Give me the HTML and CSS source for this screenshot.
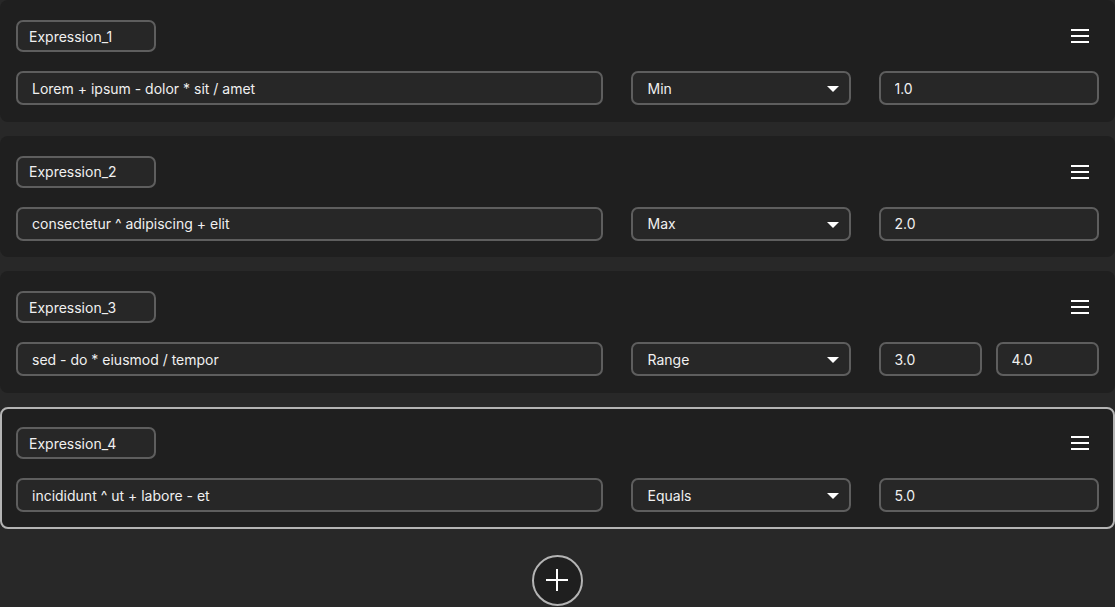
FILE: index.html
```html
<!DOCTYPE html>
<html lang="en">
    <head>
        <meta charset="UTF-8">
        <title>Expressions</title>
        <link rel="stylesheet" href="styles.css">
    </head>
    <body>
        <div class="list">
            <div class="card">
                <div class="card-head">
                    <input class="field name" value="Expression_1">
                    <button class="menu-btn"><svg width="18" height="14" viewBox="0 0 18 14"><path d="M0 1h18M0 7h18M0 13h18" stroke="#fff" stroke-width="2"/></svg></button>
                </div>
                <div class="card-row">
                    <input class="field" value="Lorem + ipsum - dolor * sit / amet">
                    <div class="select-wrap">
                        <select class="field select"><option>Min</option></select>
                        <svg class="arrow" width="12" height="6" viewBox="0 0 12 6"><path d="M0 0h12L6 6z" fill="#fff"/></svg>
                    </div>
                    <div class="values"><input class="field" value="1.0"></div>
                </div>
            </div>
            <div class="card">
                <div class="card-head">
                    <input class="field name" value="Expression_2">
                    <button class="menu-btn"><svg width="18" height="14" viewBox="0 0 18 14"><path d="M0 1h18M0 7h18M0 13h18" stroke="#fff" stroke-width="2"/></svg></button>
                </div>
                <div class="card-row">
                    <input class="field" value="consectetur ^ adipiscing + elit">
                    <div class="select-wrap">
                        <select class="field select"><option>Max</option></select>
                        <svg class="arrow" width="12" height="6" viewBox="0 0 12 6"><path d="M0 0h12L6 6z" fill="#fff"/></svg>
                    </div>
                    <div class="values"><input class="field" value="2.0"></div>
                </div>
            </div>
            <div class="card">
                <div class="card-head">
                    <input class="field name" value="Expression_3">
                    <button class="menu-btn"><svg width="18" height="14" viewBox="0 0 18 14"><path d="M0 1h18M0 7h18M0 13h18" stroke="#fff" stroke-width="2"/></svg></button>
                </div>
                <div class="card-row">
                    <input class="field" value="sed - do * eiusmod / tempor">
                    <div class="select-wrap">
                        <select class="field select"><option>Range</option></select>
                        <svg class="arrow" width="12" height="6" viewBox="0 0 12 6"><path d="M0 0h12L6 6z" fill="#fff"/></svg>
                    </div>
                    <div class="values two"><input class="field" value="3.0"><input class="field" value="4.0"></div>
                </div>
            </div>
            <div class="card active">
                <div class="card-head">
                    <input class="field name" value="Expression_4">
                    <button class="menu-btn"><svg width="18" height="14" viewBox="0 0 18 14"><path d="M0 1h18M0 7h18M0 13h18" stroke="#fff" stroke-width="2"/></svg></button>
                </div>
                <div class="card-row">
                    <input class="field" value="incididunt ^ ut + labore - et">
                    <div class="select-wrap">
                        <select class="field select"><option>Equals</option></select>
                        <svg class="arrow" width="12" height="6" viewBox="0 0 12 6"><path d="M0 0h12L6 6z" fill="#fff"/></svg>
                    </div>
                    <div class="values"><input class="field" value="5.0"></div>
                </div>
            </div>
            <div class="add-row">
                <button class="add-btn"><svg width="22" height="22" viewBox="0 0 22 22"><path d="M11 0v22M0 11h22" stroke="#fff" stroke-width="2"/></svg></button>
            </div>
        </div>
    </body>
</html>
```

FILE: styles.css
```css
body {
    margin: 0;
    background-color: #282828;
    color: #f0f0f0;
    font-family: Inter, "Noto Sans", sans-serif;
    font-size: 14px;
}

.list {
    display: flex;
    flex-direction: column;
    gap: 14px;
    width: 1114.5px;
}

.card {
    background-color: #1f1f1f;
    border: 2px solid transparent;
    border-radius: 8px;
    padding: 18px 14px 14.7px;
    display: flex;
    flex-direction: column;
    gap: 19px;
}
.card.active {
    border-color: #b4b4b4;
}

.card-head {
    display: flex;
    justify-content: space-between;
    align-items: center;
}

.card-row {
    display: grid;
    grid-template-columns: 1fr 220px 220px;
    gap: 28px;
}

.field {
    box-sizing: border-box;
    height: 34px;
    width: 100%;
    margin: 0;
    padding: 0 14px;
    background-color: #272727;
    border: 2px solid #5e5e5e;
    border-radius: 7px;
    color: #f0f0f0;
    font-family: inherit;
    font-size: 14px;
    outline: none;
}
.field.name {
    width: 140px;
    height: 32px;
    padding: 0 11px;
}

.select-wrap {
    position: relative;
}
.select {
    appearance: none;
    -webkit-appearance: none;
    padding-left: 15px;
}
.arrow {
    position: absolute;
    right: 12px;
    top: 15px;
    pointer-events: none;
}

.values {
    display: flex;
    gap: 14px;
}
.values .field {
    min-width: 0;
}

.menu-btn {
    width: 38px;
    height: 32px;
    padding: 0;
    background: none;
    border: none;
    display: flex;
    align-items: center;
    justify-content: center;
}

.add-row {
    display: flex;
    justify-content: center;
    padding-top: 12px;
}
.add-btn {
    width: 51px;
    height: 51px;
    border-radius: 50%;
    border: 2px solid #b4b4b4;
    background-color: #1f1f1f;
    padding: 0;
    display: flex;
    align-items: center;
    justify-content: center;
}
```
